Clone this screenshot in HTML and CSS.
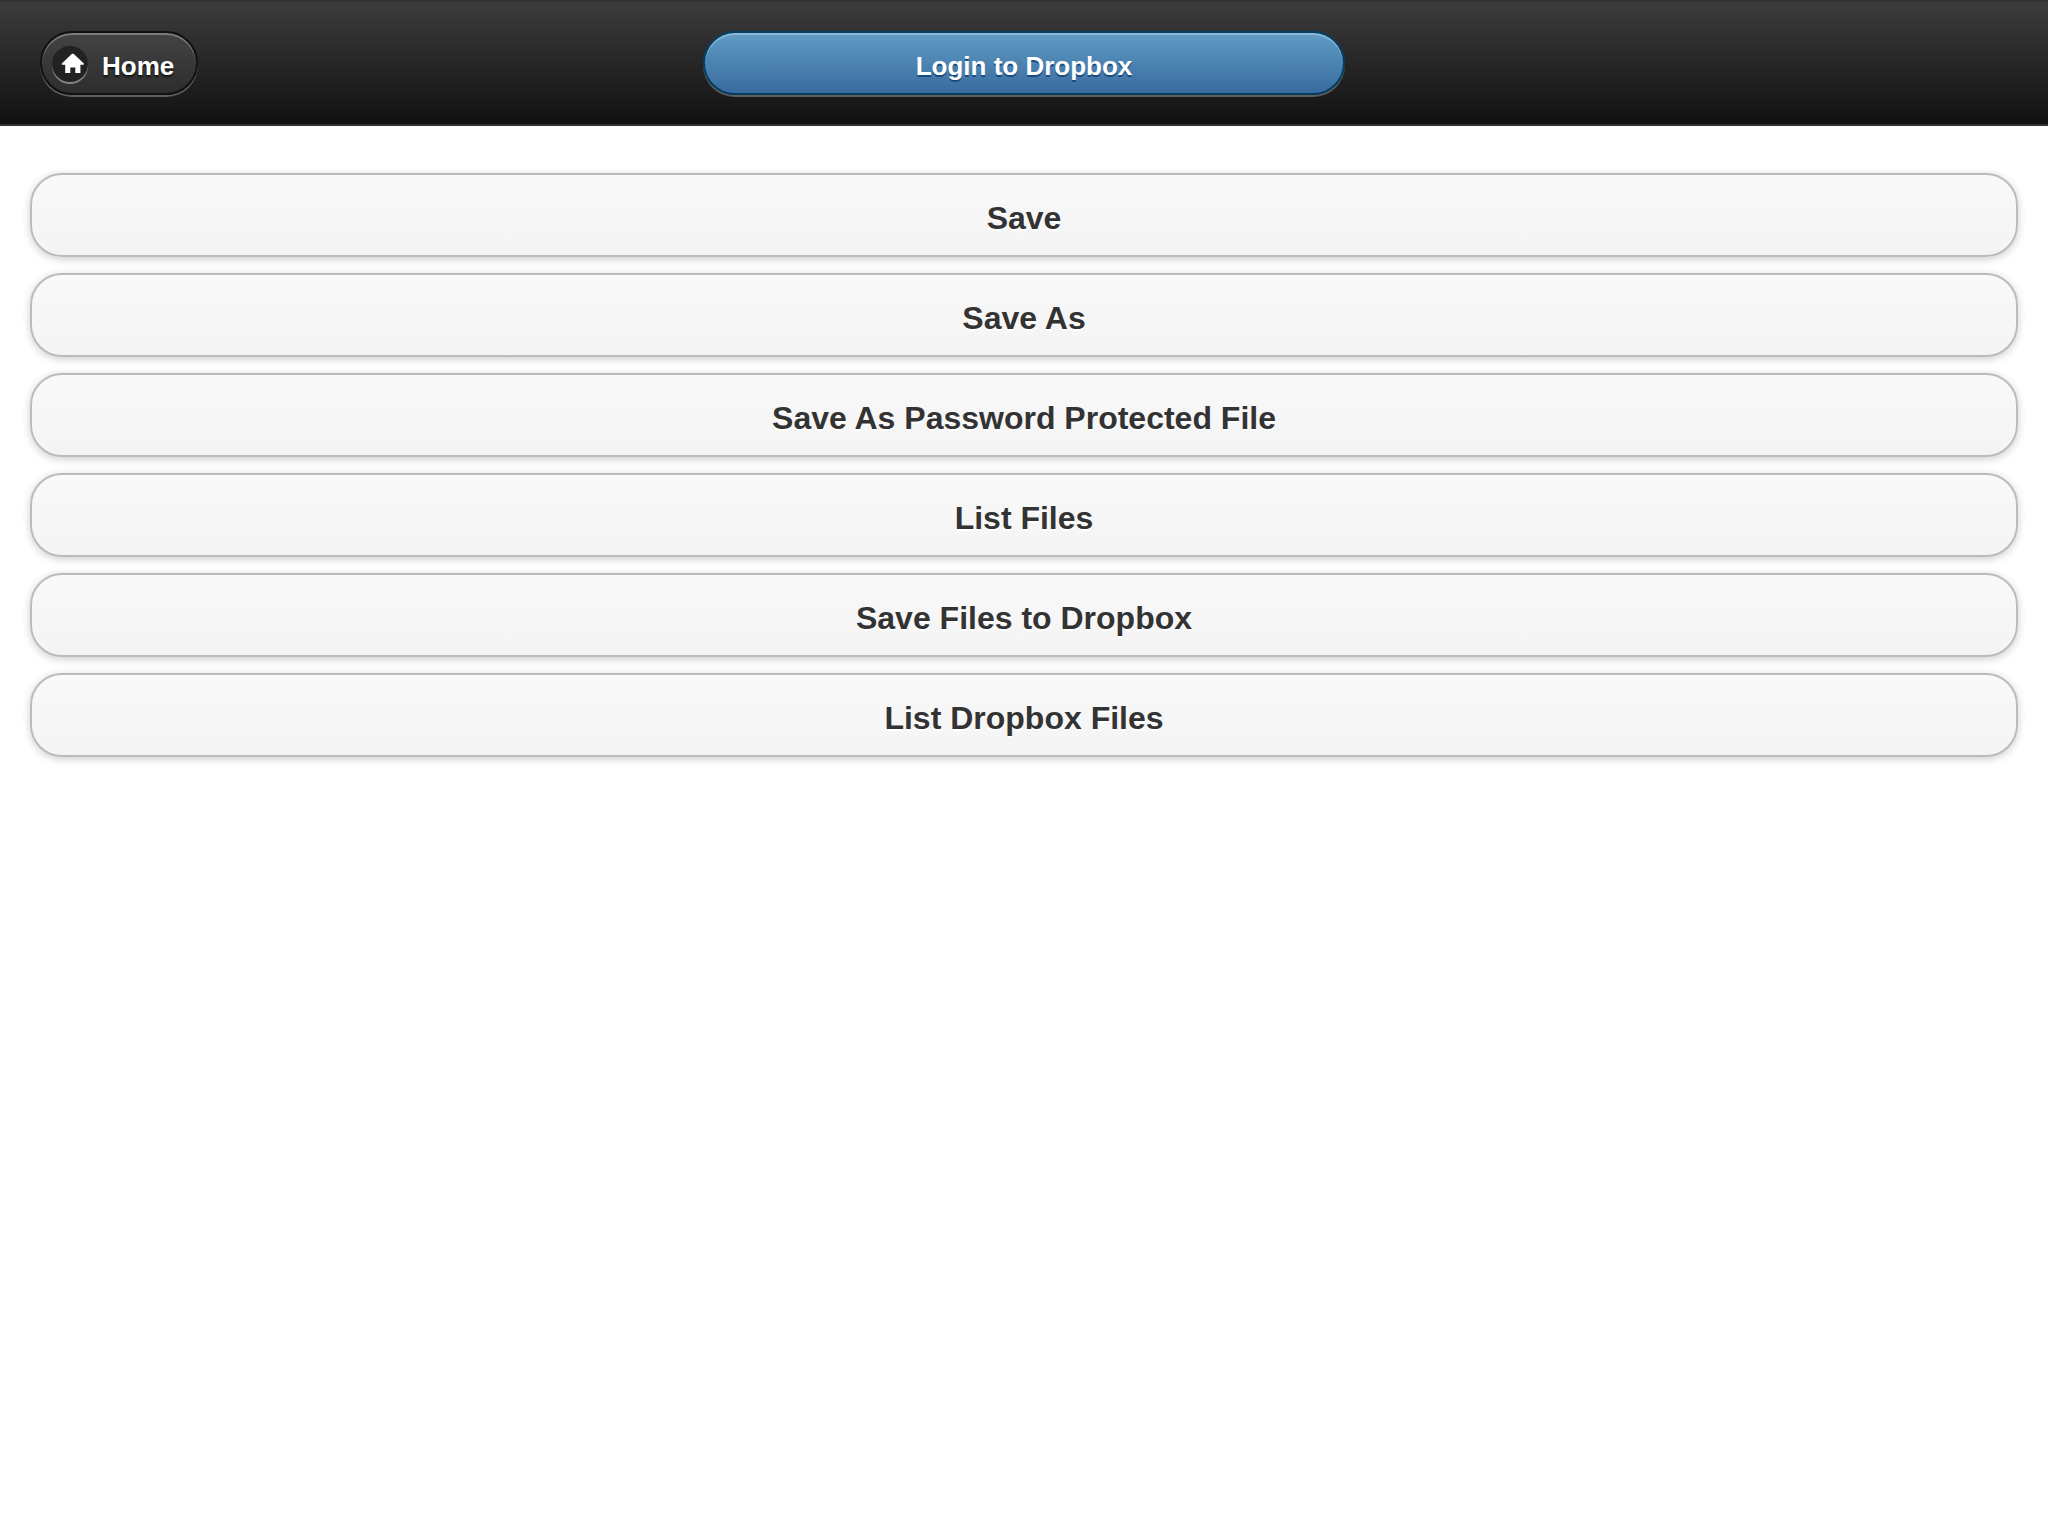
FILE: index.html
```html
<!DOCTYPE html>
<html lang="en">
<head>
    <meta charset="UTF-8">
    <meta name="viewport" content="width=device-width, initial-scale=1.0">
    <title>Files</title>
    <link rel="stylesheet" href="styles.css">
</head>
<body>
    <header class="header">
        <a href="#home" class="bar-btn home-btn">
            <span class="icon">
                <svg width="36" height="36" viewBox="0 0 36 36" aria-hidden="true">
                    <path d="M20 7.7h1.6l10.2 9.9v1.1h-3.4V27h-5.1v-5.5h-5V27h-5.1v-8.3H9.8v-1.1z" fill="#fff"/>
                </svg>
            </span>
            Home
        </a>
        <button type="button" class="bar-btn login-btn">Login to Dropbox</button>
    </header>
    <main class="content">
        <button type="button" class="btn">Save</button>
        <button type="button" class="btn">Save As</button>
        <button type="button" class="btn">Save As Password Protected File</button>
        <button type="button" class="btn">List Files</button>
        <button type="button" class="btn">Save Files to Dropbox</button>
        <button type="button" class="btn">List Dropbox Files</button>
    </main>
</body>
</html>
```
FILE: styles.css
```css
* { box-sizing: border-box; }
body {
    margin: 0;
    background: #fff;
    font-family: Helvetica, "Liberation Sans", Arial, sans-serif;
}
.header {
    display: grid;
    grid-template-columns: 1fr minmax(0, 642px) 1fr;
    align-items: center;
    padding: 29px 40px;
    border-top: 2px solid #333;
    border-bottom: 2px solid #333;
    background: linear-gradient(#3c3c3c, #111);
}
.bar-btn {
    height: 64px;
    padding: 6px 24px 0;
    border: 2px solid #111;
    border-radius: 32px;
    color: #fff;
    font-family: inherit;
    font-size: 26px;
    font-weight: bold;
    line-height: 32px;
    text-decoration: none;
    cursor: pointer;
}
.home-btn {
    display: flex;
    align-items: center;
    justify-self: start;
    gap: 14px;
    padding: 5px 22px 0 10px;
    background: linear-gradient(#444, #2d2d2d);
    text-shadow: 0 2px 2px #111;
    box-shadow: inset 0 2px 0 rgba(255, 255, 255, 0.3), 0 2px 0 rgba(255, 255, 255, 0.3);
}
.login-btn {
    border-color: #044062;
    background: linear-gradient(#5f9cc5, #396b9e);
    text-shadow: 0 2px 0 #194b7e;
    box-shadow: inset 0 2px 0 rgba(255, 255, 255, 0.3), 0 2px 0 rgba(255, 255, 255, 0.3);
}
.icon {
    width: 36px;
    height: 36px;
    margin-bottom: 4px;
    border-radius: 50%;
    background: #222;
    box-shadow: 0 2px 0 rgba(255, 255, 255, 0.4);
}
.icon svg { display: block; }
.content {
    display: flex;
    flex-direction: column;
    gap: 16px;
    padding: 47px 30px;
}
.btn {
    width: 100%;
    height: 84px;
    padding: 5px 40px 0;
    border: 2px solid #bbb;
    border-radius: 32px;
    background: linear-gradient(#f9f9f9, #f4f4f4);
    color: #333;
    font-family: inherit;
    font-size: 32px;
    font-weight: bold;
    line-height: 40px;
    text-shadow: 0 2px 0 #fff;
    box-shadow: 0 2px 8px rgba(0, 0, 0, 0.2);
    cursor: pointer;
}
```
